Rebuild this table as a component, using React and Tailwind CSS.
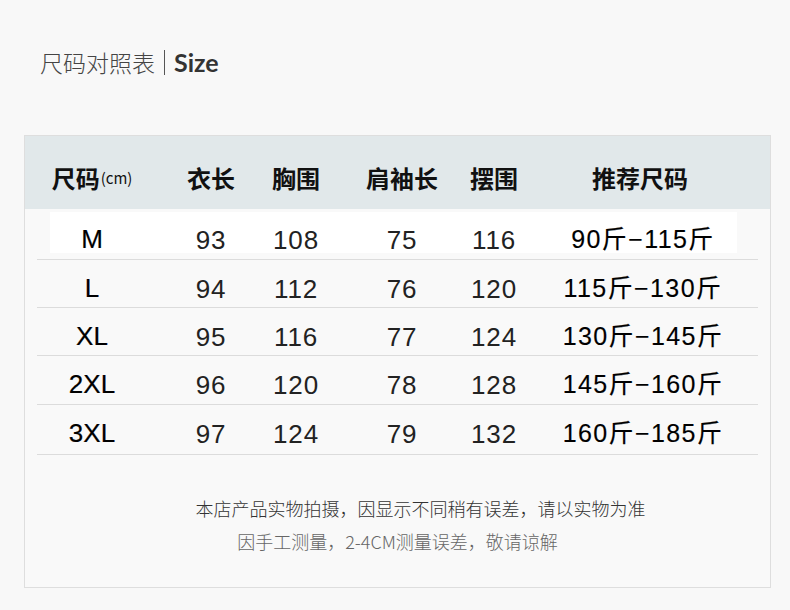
const rows = [
  { size: "M", len: "93", chest: "108", sleeve: "75", hem: "116", rec: "90斤−115斤" },
  { size: "L", len: "94", chest: "112", sleeve: "76", hem: "120", rec: "115斤−130斤" },
  { size: "XL", len: "95", chest: "116", sleeve: "77", hem: "124", rec: "130斤−145斤" },
  { size: "2XL", len: "96", chest: "120", sleeve: "78", hem: "128", rec: "145斤−160斤" },
  { size: "3XL", len: "97", chest: "124", sleeve: "79", hem: "132", rec: "160斤−185斤" },
];

const rowHeights = ["h-[48px]", "h-[48px]", "h-[49px]", "h-[50px]"];

const cjk = "font-['Noto_Sans_CJK_SC',sans-serif]";
const num = "font-['Liberation_Sans','Noto_Sans_CJK_SC',sans-serif]";
const cols = "grid grid-cols-[110px_128px_42px_170px_14px_284px] items-center";

function Cell({ children, className = "" }) {
  return (
    <div className={`flex justify-center whitespace-nowrap ${className}`}>{children}</div>
  );
}

function RowCells({ r }) {
  return (
    <>
      <Cell className="text-[26px] text-black [-webkit-text-stroke:0.2px_#000]">{r.size}</Cell>
      <Cell className="pt-[3px] text-[26px] tracking-[0.8px] text-[#222]">{r.len}</Cell>
      <Cell className="pt-[3px] text-[26px] tracking-[0.8px] text-[#222]">{r.chest}</Cell>
      <Cell className="pt-[3px] text-[26px] tracking-[0.8px] text-[#222]">{r.sleeve}</Cell>
      <Cell className="pt-[3px] text-[26px] tracking-[0.8px] text-[#222]">{r.hem}</Cell>
      <Cell className="text-[25px] tracking-[1.4px] text-black [-webkit-text-stroke:0.15px_#000]">{r.rec}</Cell>
    </>
  );
}

export default function App() {
  const [first, ...rest] = rows;
  return (
    <div className="h-[610px] w-[790px] overflow-hidden bg-[#f8f8f8]">
      <div className="flex h-[135px] items-start pl-[40px] pt-[47px]">
        <span className={`${cjk} text-[23px] font-light leading-[30px] text-[#444]`}>尺码对照表</span>
        <span className="ml-[9px] mr-[9px] mt-[3px] h-[25px] w-px bg-[#555]" />
        <span className="font-['Lato',sans-serif] text-[25px] font-bold leading-[30px] text-[#333]">Size</span>
      </div>

      <div className="ml-[24px] h-[453px] w-[747px] border border-[#dedede] bg-[#f9f9f9]">
        <div className="h-[73px] bg-[#e1e8ea] pt-[27px]">
          <div className={`mx-[12px] ${cols} ${cjk} text-[24px] font-bold leading-[30px] text-[#111]`}>
            <Cell className="items-end">
              尺码<span className="ml-[1px] text-[15px] font-normal">(cm)</span>
            </Cell>
            <Cell>衣长</Cell>
            <Cell>胸围</Cell>
            <Cell>肩袖长</Cell>
            <Cell>摆围</Cell>
            <Cell className="-ml-[6px]">推荐尺码</Cell>
          </div>
        </div>

        <div className={`${num} leading-[30px]`}>
          <div className="mx-[12px] h-[51px] border-b border-[#dcdcdc] pt-[3px]">
            <div className="ml-[13px] mr-[21px] h-[41px] bg-white pt-[10px]">
              <div className={`-ml-[13px] ${cols}`}>
                <RowCells r={first} />
              </div>
            </div>
          </div>
          {rest.map((r, i) => (
            <div
              key={r.size}
              className={`mx-[12px] ${rowHeights[i]} border-b border-[#dcdcdc] pt-[11px]`}
            >
              <div className={cols}>
                <RowCells r={r} />
              </div>
            </div>
          ))}
        </div>

        <div className={`flex flex-col items-center pt-[40px] ${cjk} font-light`}>
          <p className="ml-[46px] text-[18px] leading-[26px] text-[#333]">
            本店产品实物拍摄，因显示不同稍有误差，请以实物为准
          </p>
          <p className="mt-[7px] text-[18px] leading-[26px] text-[#666]">
            因手工测量，2-4CM测量误差，敬请谅解
          </p>
        </div>
      </div>
    </div>
  );
}
